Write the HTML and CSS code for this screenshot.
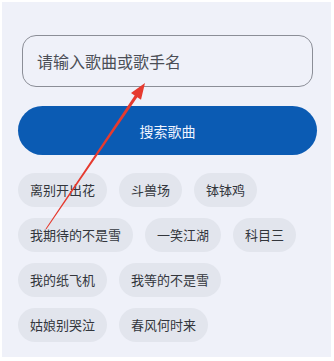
FILE: index.html
```html
<!DOCTYPE html>
<html lang="zh">
<head>
    <meta charset="UTF-8">
    <meta name="viewport" content="width=device-width, initial-scale=1.0">
    <title>搜索歌曲</title>
    <link rel="stylesheet" href="styles.css">
</head>
<body>

    <div class="panel">
        <div class="search-box">请输入歌曲或歌手名</div>
        <button class="search-btn">搜索歌曲</button>
        <div class="tags">
            <span class="tag">离别开出花</span>
            <span class="tag">斗兽场</span>
            <span class="tag">钵钵鸡</span>
            <span class="tag">我期待的不是雪</span>
            <span class="tag">一笑江湖</span>
            <span class="tag">科目三</span>
            <span class="tag">我的纸飞机</span>
            <span class="tag">我等的不是雪</span>
            <span class="tag">姑娘别哭泣</span>
            <span class="tag">春风何时来</span>
        </div>
    </div>

    <svg class="arrow" width="334" height="361" viewBox="0 0 334 361">
        <polygon points="145,83 141,99.7 137.3,97.2 46.4,229.3 45.6,228.7 134.7,95.4 131,92.9" fill="#e63a2f"/>
    </svg>

</body>
</html>
```

FILE: styles.css
```css
* {
    margin: 0;
    padding: 0;
    box-sizing: border-box;
}
body {
    background: #ffffff;
    font-family: "Noto Sans CJK SC", "Noto Sans", sans-serif;
    width: 334px;
    height: 361px;
    overflow: hidden;
    padding: 2px 3px 4px 2px;
}
.panel {
    height: 100%;
    background: #eff1f9;
    padding: 33px 14px 0 16px;
}
.search-box {
    margin: 0 4px;
    height: 52px;
    border: 1px solid #8b8e97;
    border-radius: 14px;
    padding: 0 14px;
    display: flex;
    align-items: center;
    font-size: 16px;
    color: #4b4e56;
}
.search-btn {
    display: block;
    width: 100%;
    height: 49px;
    margin-top: 19px;
    border: none;
    border-radius: 25px;
    background: #0b5bb3;
    color: #eef4ff;
    font-family: inherit;
    font-size: 14px;
}
.tags {
    display: flex;
    flex-wrap: wrap;
    gap: 11px 12px;
    margin-top: 18px;
}
.tag {
    height: 34px;
    line-height: 34px;
    padding: 0 12px;
    border-radius: 17px;
    background: #e2e5ed;
    color: #33363c;
    font-size: 13px;
}
.arrow {
    position: absolute;
    left: 0;
    top: 0;
    pointer-events: none;
}
```
